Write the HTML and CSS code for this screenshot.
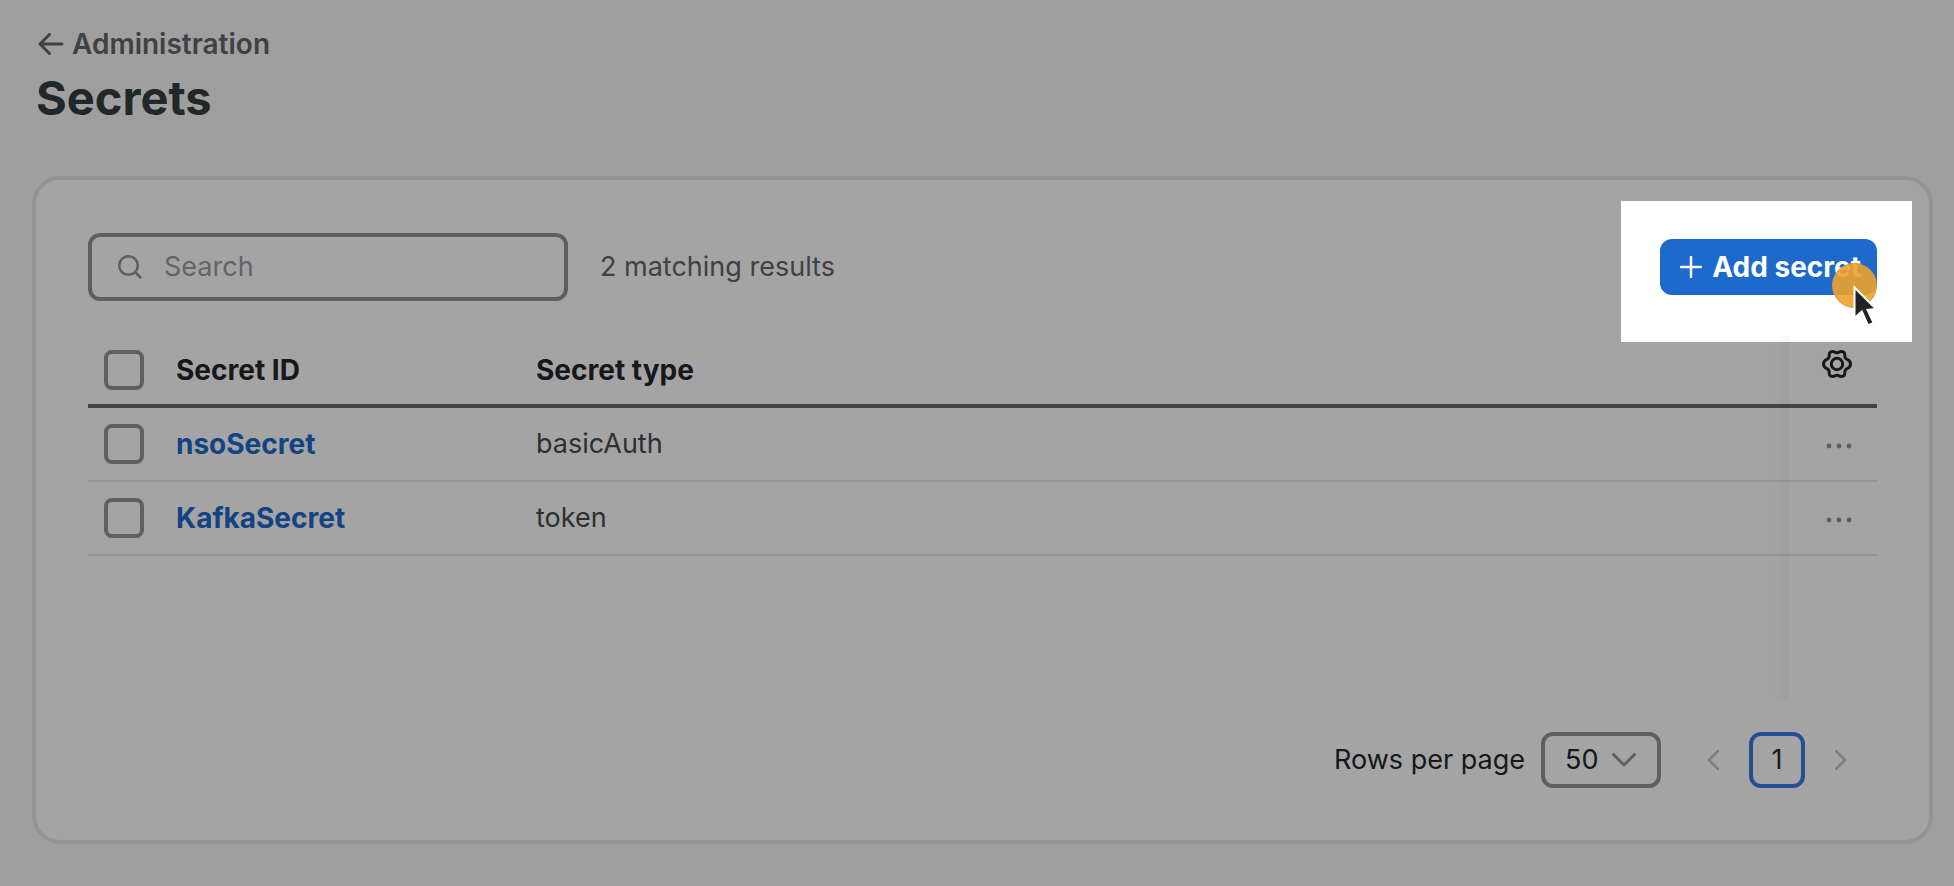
FILE: index.html
```html
<!DOCTYPE html>
<html lang="en">
<head>
    <meta charset="UTF-8">
    <meta name="viewport" content="width=device-width, initial-scale=1.0">
    <title>Secrets</title>
    <link rel="stylesheet" href="styles.css">
</head>
<body>
    <header class="page-header">
        <a class="back-link" href="#">
            <svg class="back-icon" viewBox="0 0 26 22" aria-hidden="true">
                <path d="M24 11H2M11.5 1.5L2 11L11.5 20.5"/>
            </svg>
            Administration
        </a>
        <h1>Secrets</h1>
    </header>

    <main class="card">
        <div class="toolbar">
            <label class="search">
                <svg class="search-icon" viewBox="0 0 24 24" aria-hidden="true">
                    <circle cx="10.500" cy="10.500" r="9.300"/>
                    <path d="M17.500 17.500L22.500 22.500"/>
                </svg>
                <input type="text" placeholder="Search" aria-label="Search">
            </label>
            <span class="results">2 matching results</span>
            <div class="add-wrap">
                <button class="add-button" type="button">
                    <svg class="plus-icon" viewBox="0 0 22 22" aria-hidden="true">
                        <path d="M11 1V21M1 11H21"/>
                    </svg>
                    Add secret
                </button>
                <div class="spotlight"></div>
                <div class="click-dot"></div>
                <svg class="cursor" viewBox="0 0 24 42" aria-hidden="true">
                    <path d="M1.500 2.500V33L8.800 26.500L15 40.300L20.600 37.800L14.500 24.800L23 24Z"/>
                </svg>
            </div>
        </div>

        <div class="table-wrap">
            <table>
                <thead>
                    <tr>
                        <th class="col-check"><input type="checkbox" aria-label="Select all"></th>
                        <th class="col-id">Secret ID</th>
                        <th>Secret type</th>
                        <th class="col-actions">
                            <button class="icon-button settings" type="button" aria-label="Table settings">
                                <svg class="gear-icon" viewBox="0 0 30 28" aria-hidden="true">
                                    <path d="M15 2.800C17 2.800 17.200 1.400 19.300 1.500C22.200 1.700 23 3.200 22.800 5.500C22.700 7.600 23.300 8.600 25.100 9.400C27.500 10.400 28.500 11.500 28.500 14C28.500 16.500 27.500 17.600 25.100 18.600C23.300 19.400 22.700 20.400 22.800 22.500C23 24.800 22.200 26.300 19.300 26.500C17.200 26.600 17 25.200 15 25.200C13 25.200 12.800 26.600 10.700 26.500C7.800 26.300 7 24.800 7.200 22.500C7.300 20.400 6.700 19.400 4.900 18.600C2.500 17.600 1.500 16.500 1.500 14C1.500 11.500 2.500 10.400 4.900 9.400C6.700 8.600 7.300 7.600 7.200 5.500C7 3.200 7.800 1.700 10.700 1.500C12.800 1.400 13 2.800 15 2.800Z"/>
                                    <circle cx="15" cy="14" r="5.700"/>
                                </svg>
                            </button>
                        </th>
                    </tr>
                </thead>
                <tbody>
                    <tr>
                        <td><input type="checkbox" aria-label="Select nsoSecret"></td>
                        <td><a class="secret-link" href="#">nsoSecret</a></td>
                        <td>basicAuth</td>
                        <td class="col-actions">
                            <button class="icon-button" type="button" aria-label="Actions for nsoSecret">
                                <svg class="dots-icon" viewBox="0 0 26 6" aria-hidden="true">
                                    <circle cx="3" cy="3" r="2.400"/><circle cx="13" cy="3" r="2.400"/><circle cx="23" cy="3" r="2.400"/>
                                </svg>
                            </button>
                        </td>
                    </tr>
                    <tr>
                        <td><input type="checkbox" aria-label="Select KafkaSecret"></td>
                        <td><a class="secret-link" href="#">KafkaSecret</a></td>
                        <td>token</td>
                        <td class="col-actions">
                            <button class="icon-button" type="button" aria-label="Actions for KafkaSecret">
                                <svg class="dots-icon" viewBox="0 0 26 6" aria-hidden="true">
                                    <circle cx="3" cy="3" r="2.400"/><circle cx="13" cy="3" r="2.400"/><circle cx="23" cy="3" r="2.400"/>
                                </svg>
                            </button>
                        </td>
                    </tr>
                </tbody>
            </table>
        </div>

        <div class="pagination">
            <label for="rows">Rows per page</label>
            <div class="select-wrap">
                <select id="rows">
                    <option>50</option>
                    <option>100</option>
                </select>
                <svg class="select-arrow" viewBox="0 0 24 14" aria-hidden="true">
                    <path d="M1.500 1.500L12 12L22.500 1.500"/>
                </svg>
            </div>
            <nav class="pages" aria-label="Pages">
                <button class="page-button" type="button" aria-label="Previous page">
                    <svg class="page-arrow" viewBox="0 0 12 20" aria-hidden="true"><path d="M11 1L2 10L11 19"/></svg>
                </button>
                <button class="page-button current" type="button">1</button>
                <button class="page-button" type="button" aria-label="Next page">
                    <svg class="page-arrow" viewBox="0 0 12 20" aria-hidden="true"><path d="M1 1L10 10L1 19"/></svg>
                </button>
            </nav>
        </div>
    </main>
</body>
</html>
```
FILE: styles.css
```css
* {
    box-sizing: border-box;
}
body {
    margin: 0;
    min-height: 100vh;
    padding: 24px 21px 24px 32px;
    background-color: #f8f8f8;
    color: #23282b;
    font-family: Inter, "Liberation Sans", sans-serif;
    font-size: 27px;
    line-height: 40px;
}
button, input, select {
    font: inherit;
    color: inherit;
}
button {
    border: 0;
    padding: 0;
    background: none;
    cursor: pointer;
}
svg {
    display: block;
    flex: none;
    fill: none;
    stroke: currentColor;
    stroke-width: 3;
    stroke-linecap: round;
    stroke-linejoin: round;
}

/* header */
.page-header {
    padding: 0 4px;
    margin-bottom: 46px;
}
.back-link {
    display: flex;
    align-items: center;
    gap: 8px;
    width: fit-content;
    padding-left: 2px;
    color: #62656b;
    font-size: 28px;
    font-weight: 600;
    text-decoration: none;
}
.back-icon {
    width: 26px;
    height: 22px;
}
h1 {
    margin: 2px 0 0;
    color: #353d40;
    font-size: 47px;
    line-height: 64px;
    font-weight: 700;
}

/* card */
.card {
    padding: 53px 52px 52px;
    border: 4px solid #e5e7ea;
    border-radius: 28px;
    background-color: #fff;
}
.toolbar {
    display: flex;
    align-items: center;
    margin-bottom: 35px;
}
.search {
    display: flex;
    align-items: center;
    gap: 22px;
    width: 480px;
    height: 68px;
    padding: 0 26px;
    border: 4px solid #8f949b;
    border-radius: 12px;
    color: #8f9399;
}
.search-icon {
    width: 24px;
    height: 24px;
    stroke-width: 2.5;
}
.search input {
    flex: 1;
    min-width: 0;
    padding: 0;
    border: 0;
    outline: 0;
    background: none;
    color: #23282b;
}
.search input::placeholder {
    color: #9a9ca1;
    opacity: 1;
}
.results {
    margin-left: 32px;
    color: #62656b;
}
.add-wrap {
    position: relative;
    margin-left: auto;
}
.add-button {
    display: flex;
    align-items: center;
    gap: 10px;
    height: 56px;
    padding: 0 16px 0 20px;
    border-radius: 12px;
    background-color: #1d69cc;
    color: #fff;
    font-size: 28px;
    font-weight: 700;
}
.plus-icon {
    width: 22px;
    height: 22px;
    stroke-width: 2.5;
}

/* dims everything but the add button */
.spotlight {
    position: absolute;
    z-index: 10;
    inset: -38px -35px -47px -39px;
    box-shadow: 0 0 0 9999px rgba(0, 0, 0, 0.355);
    pointer-events: none;
}
.click-dot {
    position: absolute;
    z-index: 11;
    right: 0;
    bottom: -13px;
    width: 45px;
    height: 45px;
    border: 1px solid #d6983a;
    border-radius: 50%;
    background-color: rgba(236, 163, 43, 0.9);
    pointer-events: none;
}
.cursor {
    position: absolute;
    z-index: 12;
    right: 0;
    bottom: -32px;
    width: 24px;
    height: 42px;
    fill: #222;
    stroke: #fff;
    stroke-width: 2;
    stroke-linejoin: miter;
    pointer-events: none;
}

/* table */
.table-wrap {
    position: relative;
    min-height: 364px;
}
.table-wrap::after {
    content: "";
    position: absolute;
    top: 0;
    right: 88px;
    bottom: 0;
    width: 16px;
    background: linear-gradient(to right, rgba(0, 0, 0, 0), rgba(0, 0, 0, 0.03));
    pointer-events: none;
}
table {
    width: 100%;
    table-layout: fixed;
    border-collapse: separate;
    border-spacing: 0;
}
th, td {
    height: 74px;
    padding: 0 16px;
    border-bottom: 2px solid #e5e7ea;
    text-align: left;
    vertical-align: middle;
}
th {
    height: 72px;
    border-bottom: 4px solid #666c72;
    font-size: 28px;
    font-weight: 700;
}
td {
    color: #464b50;
}
.col-check {
    width: 72px;
}
.col-id {
    width: 360px;
}
.col-actions {
    width: 88px;
    padding: 0;
}
input[type="checkbox"] {
    appearance: none;
    display: block;
    width: 40px;
    height: 40px;
    margin: 0;
    border: 4px solid #92969c;
    border-radius: 8px;
}
.secret-link {
    color: #1d69cc;
    font-size: 28px;
    font-weight: 700;
    text-decoration: none;
}
.icon-button {
    display: flex;
    align-items: center;
    justify-content: center;
    width: 100%;
    height: 48px;
    padding: 4px 0 0 12px;
}
.settings {
    height: 60px;
    padding: 0 0 12px 8px;
    color: #23282b;
}
.gear-icon {
    width: 30px;
    height: 28px;
}
.dots-icon {
    width: 26px;
    height: 6px;
    fill: #8f9399;
    stroke: none;
}

/* pagination */
.pagination {
    display: flex;
    align-items: center;
    justify-content: flex-end;
    margin-top: 32px;
    padding-right: 8px;
}
.select-wrap {
    position: relative;
    margin: 0 24px 0 16px;
}
select {
    appearance: none;
    display: block;
    width: 120px;
    height: 56px;
    padding: 0 20px;
    border: 4px solid #8f949b;
    border-radius: 12px;
    background: none;
}
.select-arrow {
    position: absolute;
    top: 21px;
    right: 25px;
    width: 24px;
    height: 14px;
    color: #8f949b;
    pointer-events: none;
}
.pages {
    display: flex;
    gap: 8px;
}
.page-button {
    display: flex;
    align-items: center;
    justify-content: center;
    width: 56px;
    height: 56px;
    border-radius: 12px;
}
.page-button.current {
    border: 4px solid #387ce0;
}
.page-arrow {
    width: 12px;
    height: 20px;
    color: #c0c3c8;
    stroke-width: 2.5;
}
```
